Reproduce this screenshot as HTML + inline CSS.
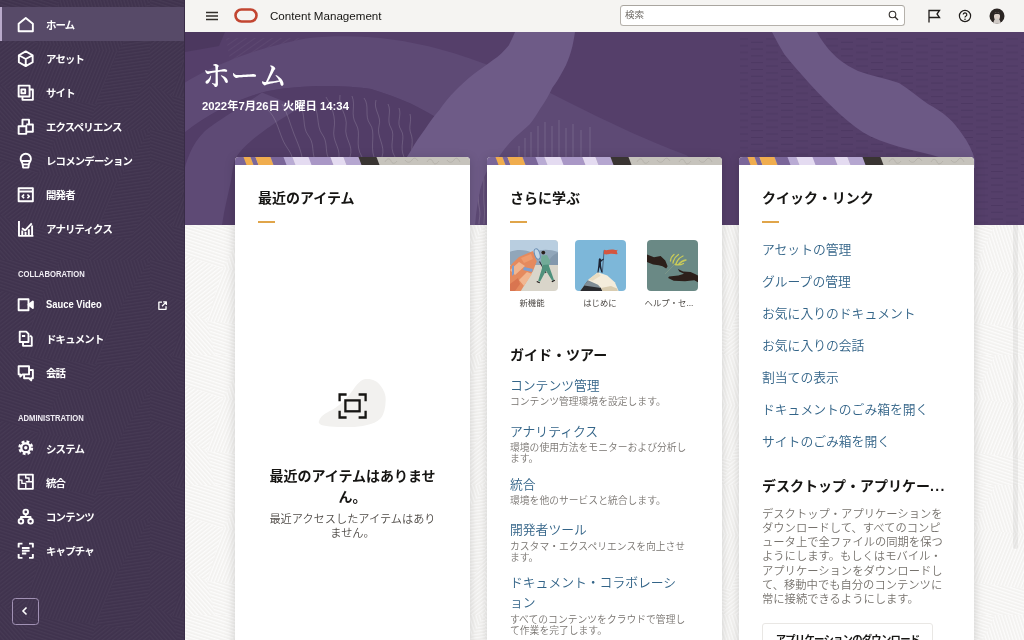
<!DOCTYPE html>
<html lang="ja">
<head>
<meta charset="utf-8">
<title>Content Management</title>
<style>
*{box-sizing:border-box;margin:0;padding:0}
html,body{width:1024px;height:640px;overflow:hidden}
body{will-change:transform;font-family:"Liberation Sans","Noto Sans CJK JP",sans-serif;background:#f1efed;color:#161513;position:relative}
#side{position:absolute;left:0;top:0;width:185px;height:640px;background:#40334e;overflow:hidden;border-right:1.5px solid #392c47}
#side .tex{position:absolute;left:0;top:0;width:185px;height:640px}
#side .sel{position:absolute;left:0;top:7px;width:183.5px;height:34px;background:#574a68;border-left:2px solid #b9aacb}
.ni{position:absolute;left:0;width:185px;height:20px;color:#fff;font-size:10.4px;letter-spacing:-.8px;font-weight:700;line-height:20px}
.ni span{position:absolute;left:46px;top:0;white-space:nowrap}
.ni svg{position:absolute;left:16.5px;top:-.2px;width:17.5px;height:17.5px;fill:none;stroke:#fff;stroke-width:1.75;stroke-linejoin:round;overflow:visible}
.sh{position:absolute;left:18px;color:#f0edf4;font-size:8.4px;font-weight:700;line-height:10px;white-space:nowrap;transform-origin:0 50%;transform:scaleX(.915)}
#collapse{position:absolute;left:12.2px;top:598px;width:27px;height:27px;border:1.6px solid #a191b4;border-radius:3.5px}
#collapse svg{position:absolute;left:6.7px;top:6.6px;width:10px;height:10px;fill:none;stroke:#fff;stroke-width:1.6}
#top{position:absolute;left:185px;top:0;width:839px;height:32px;background:#f5f4f2}
#top .t{position:absolute;left:85px;top:9px;font-size:11.6px;line-height:14px;color:#161513;white-space:nowrap}
#search{position:absolute;left:435px;top:5.4px;width:285px;height:20.6px;background:#fff;border:1px solid #b5b1ab;border-top-color:#a9a59f;border-radius:3.5px}
#search span{position:absolute;left:4px;top:1.8px;font-size:9.6px;font-weight:350;line-height:14px;color:#66625d}
#banner{position:absolute;left:185px;top:32px;width:839px;height:192.5px;background:#4f3b62;overflow:hidden}
#banner svg{position:absolute;left:0;top:0}
#lower{position:absolute;left:185px;top:224.5px;width:839px;height:416px;background:#f3f2f0;overflow:hidden}
h1{position:absolute;left:202.3px;top:59.8px;font-family:"Liberation Serif","Noto Serif CJK SC",serif;font-weight:600;font-size:28.2px;line-height:34px;color:#fff;white-space:nowrap}
#date{position:absolute;left:202px;top:98.7px;font-size:11.3px;font-weight:700;color:#fff;line-height:14px;white-space:nowrap}
.card{position:absolute;top:157px;width:235px;height:500px;background:#fff;border-radius:4px 4px 0 0;overflow:hidden;box-shadow:0 2px 11px rgba(0,0,0,.17)}
.strip{position:absolute;left:0;top:0;width:235px;height:8.4px;background:#c6c3bc;overflow:hidden}
.strip i{position:absolute;top:-2px;height:12px;transform:skewX(21deg)}
.card h2{position:absolute;left:23px;font-size:14px;font-weight:700;line-height:20px;color:#161513;white-space:nowrap}
.card .bar{position:absolute;left:23px;top:63.5px;width:17px;height:2px;background:#e0a54a}
a{color:#336488;text-decoration:none}
.lk{position:absolute;left:23px;font-size:12.8px;font-weight:350;line-height:20px;white-space:nowrap}
.ds{position:absolute;left:23px;font-size:9.8px;font-weight:350;line-height:11px;color:#787470;white-space:nowrap}
.tl{position:absolute;top:83px;width:51px;height:51px;border-radius:4px;overflow:hidden}
.tl svg{position:absolute;left:0;top:0;width:51px;height:51px}
.tc{position:absolute;top:139.600px;width:70px;text-align:center;font-size:8.4px;line-height:12px;color:#4a4642;white-space:nowrap}
</style>
</head>
<body>
<div id="side">
  <svg style="position:absolute;left:0;top:0" width="185" height="640"><defs><pattern id="sh0" width="3.2" height="3.2" patternUnits="userSpaceOnUse" patternTransform="rotate(18)"><rect width="3.2" height="1.2" fill="#fff" fill-opacity=".035"/></pattern><pattern id="sh1" width="3.2" height="3.2" patternUnits="userSpaceOnUse" patternTransform="rotate(72)"><rect width="3.2" height="1.2" fill="#fff" fill-opacity=".035"/></pattern><pattern id="sh2" width="3.2" height="3.2" patternUnits="userSpaceOnUse" patternTransform="rotate(-38)"><rect width="3.2" height="1.2" fill="#fff" fill-opacity=".035"/></pattern><pattern id="sh3" width="3.2" height="3.2" patternUnits="userSpaceOnUse" patternTransform="rotate(112)"><rect width="3.2" height="1.2" fill="#fff" fill-opacity=".035"/></pattern><pattern id="sh4" width="3.2" height="3.2" patternUnits="userSpaceOnUse" patternTransform="rotate(-8)"><rect width="3.2" height="1.2" fill="#fff" fill-opacity=".035"/></pattern><pattern id="sh5" width="3.2" height="3.2" patternUnits="userSpaceOnUse" patternTransform="rotate(48)"><rect width="3.2" height="1.2" fill="#fff" fill-opacity=".035"/></pattern><pattern id="sgeo" width="150" height="130" patternUnits="userSpaceOnUse"><polygon points="0,0 60,0 38,44 0,30" fill="url(#sh0)"/><polygon points="60,0 120,0 150,0 118,52 38,44" fill="url(#sh1)"/><polygon points="0,30 38,44 22,96 0,84" fill="url(#sh2)"/><polygon points="38,44 118,52 96,104 22,96" fill="url(#sh3)"/><polygon points="118,52 150,0 150,70 130,110 96,104" fill="url(#sh4)"/><polygon points="0,84 22,96 30,130 0,130" fill="url(#sh5)"/><polygon points="22,96 96,104 88,130 30,130" fill="url(#sh0)"/><polygon points="96,104 130,110 150,70 150,130 88,130" fill="url(#sh2)"/></pattern></defs><rect width="185" height="640" fill="url(#sgeo)"/></svg>
  <div class="sel"></div>
  <div class="ni" style="top:15.7px"><svg viewBox="0 0 16 16"><path d="M1.500 7L8 1.800 14.500 7v7h-13z"/></svg><span>ホーム</span></div>
  <div class="ni" style="top:49.8px"><svg viewBox="0 0 16 16"><path d="M8 1.300l6.300 3.500v6.400L8 14.700l-6.300-3.500V4.800zM1.700 4.800L8 8.200l6.300-3.400M8 8.200v6.500"/></svg><span>アセット</span></div>
  <div class="ni" style="top:83.9px"><svg viewBox="0 0 16 16"><path d="M1.500 1.500h10v10h-10zM5 11.500v3h9.500V5h-3M4 5h3.500v3.500H4z"/></svg><span>サイト</span></div>
  <div class="ni" style="top:118.1px"><svg viewBox="0 0 16 16"><path d="M5 7V1.500h6V6M1.500 7.500h7v7h-7zM8.500 6h6v6.500h-6"/></svg><span>エクスペリエンス</span></div>
  <div class="ni" style="top:152.2px"><svg viewBox="0 0 16 16"><path d="M3.300 6.300a4.700 4.700 0 0 1 9.400 0c0 1.800-1 2.800-1.700 4.200l-.6 3.800H5.600L5 10.500C4.300 9.100 3.300 8.100 3.300 6.300zM4 8.300h8M5 11.300h6"/></svg><span>レコメンデーション</span></div>
  <div class="ni" style="top:186.3px"><svg viewBox="0 0 16 16"><path d="M1.500 2h13v12h-13zM1.500 5h13" /><path d="M6.500 7.800L4.800 9.500 6.500 11.200M9.500 7.800L11.200 9.500 9.500 11.200" stroke-width="1.500"/></svg><span>開発者</span></div>
  <div class="ni" style="top:220.4px"><svg viewBox="0 0 16 16"><path d="M1.800 1v13.500H15M4.800 14V9.500M7.800 14V11M10.800 14V8.500M13.800 14V5M4.500 7.500l3 2 6-6.500"/></svg><span>アナリティクス</span></div>
  <div class="sh" style="top:269.2px">COLLABORATION</div>
  <div class="ni" style="top:295.9px"><svg viewBox="0 0 16 16"><path d="M1.500 3h9v10h-9z"/><path d="M10.500 8l4-3v6z" fill="#fff"/></svg><span style="font-size:11.2px;letter-spacing:0;top:-1.800px;transform-origin:0 50%;transform:scaleX(.84)">Sauce Video</span>
    <svg viewBox="0 0 16 16" style="left:158.300px;top:4.700px;width:9.200px;height:9.200px;stroke-width:2.300"><path d="M7 2H1.500v12.500H14V9M9 1.500h5.500V7M14 2L7 9"/></svg></div>
  <div class="ni" style="top:330.0px"><svg viewBox="0 0 16 16"><path d="M2.500 1.500h6l2 2v7.500h-8zM5.500 11v3.500h8V6.500l-1.500-1.500M4.500 5.500h3"/></svg><span>ドキュメント</span></div>
  <div class="ni" style="top:364.2px"><svg viewBox="0 0 16 16"><path d="M1.500 2h9.500v7.500H5l-2 2v-2H1.500zM11 5.500h3.500v7.500H13v2l-2-2H6.500V9.500"/></svg><span>会話</span></div>
  <div class="sh" style="top:412.8px">ADMINISTRATION</div>
  <div class="ni" style="top:439.5px"><svg viewBox="0 0 16 16"><circle cx="8" cy="8" r="5.600" stroke-width="2.400" stroke-dasharray="2.500 1.898"/><circle cx="8" cy="8" r="4.600" fill="#fff" stroke-width="1"/><circle cx="8" cy="8" r="2.300" stroke="#40334e" stroke-width="1.500"/></svg><span>システム</span></div>
  <div class="ni" style="top:473.6px"><svg viewBox="0 0 16 16"><path d="M1.500 1.500h13v13h-13z"/><path d="M1.500 6.500h3v3h3.500v5M8 1.500v3h3v3.500h3.500M8 8h3.500" stroke-width="1.300"/></svg><span>統合</span></div>
  <div class="ni" style="top:507.7px"><svg viewBox="0 0 16 16"><circle cx="8" cy="3.600" r="2.100"/><circle cx="3.600" cy="12.200" r="2.100"/><circle cx="12.400" cy="12.200" r="2.100"/><path d="M8 5.700v2.600M3.600 10.100V8.300h8.800v1.800"/></svg><span>コンテンツ</span></div>
  <div class="ni" style="top:541.8px"><svg viewBox="0 0 16 16"><path d="M5 1.500H1.500V5M11 1.500h3.500V5M5 14.500H1.500V11M11 14.500h3.500V11M4.500 5.500h7M4.500 8h7M4.500 10.500h4"/></svg><span>キャプチャ</span></div>
  <div id="collapse"><svg viewBox="0 0 10 10"><path d="M6.500 1.500L3 5l3.500 3.500"/></svg></div>
</div>
<div id="top">
  <svg style="position:absolute;left:20px;top:11px" width="14" height="10" viewBox="0 0 14 10"><path d="M1 1.500h12M1 5h12M1 8.500h12" stroke="#312d2a" stroke-width="1.300" fill="none"/></svg>
  <svg style="position:absolute;left:49px;top:8.400px" width="24" height="15" viewBox="0 0 24 15"><rect x="1.500" y="1.500" width="21" height="12" rx="6" fill="none" stroke="#c24531" stroke-width="2.600"/></svg>
  <div class="t">Content Management</div>
  <div id="search"><span>検索</span>
    <svg style="position:absolute;right:5px;top:4px" width="11" height="11" viewBox="0 0 11 11"><circle cx="4.500" cy="4.500" r="3.300" fill="none" stroke="#312d2a" stroke-width="1.100"/><path d="M7 7l3 3" stroke="#312d2a" stroke-width="1.200"/></svg></div>
  <svg style="position:absolute;left:742px;top:9px" width="14" height="14" viewBox="0 0 14 14"><path d="M2 13.500V1.500h10.500L10 5l2.500 3.500H2" fill="none" stroke="#201d1b" stroke-width="1.300"/></svg>
  <svg style="position:absolute;left:773px;top:9px" width="14" height="14" viewBox="0 0 14 14"><circle cx="7" cy="7" r="5.600" fill="none" stroke="#201d1b" stroke-width="1.200"/><path d="M5.200 5.600a1.800 1.800 0 1 1 2.600 1.600c-.6.300-.8.600-.8 1.300" fill="none" stroke="#201d1b" stroke-width="1.200"/><circle cx="7" cy="10.200" r=".8" fill="#201d1b"/></svg>
  <svg style="position:absolute;left:804px;top:8px" width="16" height="16" viewBox="0 0 16 16"><circle cx="8" cy="8" r="7.500" fill="#2b2523"/><ellipse cx="8" cy="8.300" rx="3" ry="4.200" fill="#ddd0c8"/><path d="M4.500 15.500c0-3 1-5 3.500-5s3.500 2 3.500 5z" fill="#cfc9c5"/><path d="M4.500 7c0-4 7-4 7 0-1-1.500-6-1.500-7 0z" fill="#2b2523"/></svg>
</div>
<div id="banner"><svg width="839" height="193" viewBox="185 32 839 193">
<defs>
<pattern id="dash" width="30" height="6.800" patternUnits="userSpaceOnUse"><path d="M1 1.500h12M16 4.900h12" stroke="#2f1f45" stroke-opacity=".22" stroke-width="1"/></pattern>
<pattern id="hat" width="5" height="5" patternUnits="userSpaceOnUse" patternTransform="rotate(-35)"><path d="M0 2.500h5" stroke="#fff" stroke-opacity=".06" stroke-width=".8"/></pattern>
</defs>
<rect x="185" y="32" width="839" height="193" fill="#553f6a"/>
<rect x="740" y="36" width="284" height="189" fill="url(#dash)"/>
<path d="M185 32h40l-6 14-34 6z" fill="#4c385f"/>
<path d="M226 38h80l-6 14-70 8z" fill="url(#hat)"/>
<path d="M184 83C215 64 262 46 309 38C371 32 434 42 500 70C560 95 604 124 686 155L700 165V225H470V150C450 122 420 104 371 89C340 84 290 85 262 92.500C235 100 205 116 184 133Z" fill="#5e4a75"/>
<path d="M184 133C205 116 235 100 262 92.500C290 85 340 84 371 89C420 104 450 122 470 150V225H184Z" fill="#523d67"/>
<path d="M262 92.500C240 108 215 122 204 132C197 139 193 146 190 153C187 160 185 166 184 172V225H222C224 210 228 195 231 181C232 173 233 166 235 159C239 152 245 146 251 141C262 132 275 122 300 108Z" fill="#5e4a75"/>
<g fill="none" stroke="#fff" stroke-opacity=".22" stroke-width=".7">
<path d="M300 105c6 10 2 22 8 30s4 14 6 22"/>
<path d="M312 100c8 12 4 26 10 34s3 16 6 23"/>
<path d="M326 97c6 10 10 20 8 32s6 18 5 28"/>
<path d="M340 95c-2 12 8 20 6 32s8 18 4 30"/>
<path d="M352 96c4 10-2 18 4 28s-2 20 6 33"/>
<path d="M364 98c6 8 0 18 6 26s0 22 4 33"/>
<path d="M376 100c-3 10 6 16 3 26s7 20 3 31"/>
<path d="M388 104c4 8-2 16 3 24s-3 18 4 29"/>
<path d="M399 108c3 8-3 14 2 22s-2 16 3 27"/>
<path d="M410 114c2 8-2 12 1 20s-1 14 2 23"/>
<path d="M268 110c8 8 10 18 14 28s8 12 10 19"/>
<path d="M282 104c6 10 8 20 12 30s6 14 8 23"/>
<path d="M478 176c3 10-1 20 1 30s0 12 0 18M483 172c2 10 0 22 1 32s0 14 0 20"/>
</g>
<path d="M515 32C513 37 511 41 508.700 45.400C504 51 499 56 493 60C487 65 480 69 473.750 74C467 79 461 85 455 91C449 97 444 103 439.400 110C434 116 430 122 425.300 128.750C420 136 415 143 411 150.600L405 160C397 180 390 200 385 225H475C476 212 478 200 480 190C482 183 484 177 487 171L497 160C499 157 501 154 503.400 150.600C507 146 511 141 516 136.600C521 132 526 128 530 124C534 119 537 114 540 109C545 102 549 95 552.500 87.500C557 82 560 76 563.400 70C567 64 569 58 571 51.600C573 45 574 38 575 32Z" fill="#6e5b87"/>
<g stroke="#fff" stroke-opacity=".2" stroke-width=".7"><path d="M519 146v12M525 138v20M531 132v26M538 126v32M545 122v36M552 126v32M559 120v38M566 128v30M573 124v34M581 130v28M590 127v31"/></g>
<path d="M772 32C776 40 780 47 784.500 54.600C792 64 800 73 809 83C820 95 830 105 842 116C851 124 860 131 870.600 136.600C882 142 895 146 907.500 149C916 151 924 153 932 155L975 168V160C972 150 968 142 962 134C958 128 953 122 948.500 118C942 112 935 108 928 104C919 98 909 89 899 83C885 78 871 76 858 71C849 67 840 61 833.700 54.600C827 48 821 40 817 32Z" fill="#6c5985"/>
</svg></div>
<div id="lower"><svg style="position:absolute;left:0;top:0" width="839" height="416"><defs><pattern id="lh0" width="3.2" height="3.2" patternUnits="userSpaceOnUse" patternTransform="rotate(18)"><rect width="3.2" height="1.2" fill="#fff" fill-opacity=".75"/></pattern><pattern id="lh1" width="3.2" height="3.2" patternUnits="userSpaceOnUse" patternTransform="rotate(72)"><rect width="3.2" height="1.2" fill="#fff" fill-opacity=".75"/></pattern><pattern id="lh2" width="3.2" height="3.2" patternUnits="userSpaceOnUse" patternTransform="rotate(-38)"><rect width="3.2" height="1.2" fill="#fff" fill-opacity=".75"/></pattern><pattern id="lh3" width="3.2" height="3.2" patternUnits="userSpaceOnUse" patternTransform="rotate(112)"><rect width="3.2" height="1.2" fill="#fff" fill-opacity=".75"/></pattern><pattern id="lh4" width="3.2" height="3.2" patternUnits="userSpaceOnUse" patternTransform="rotate(-8)"><rect width="3.2" height="1.2" fill="#fff" fill-opacity=".75"/></pattern><pattern id="lh5" width="3.2" height="3.2" patternUnits="userSpaceOnUse" patternTransform="rotate(48)"><rect width="3.2" height="1.2" fill="#fff" fill-opacity=".75"/></pattern><pattern id="lgeo" width="150" height="130" patternUnits="userSpaceOnUse"><polygon points="0,0 60,0 38,44 0,30" fill="url(#lh0)"/><polygon points="60,0 120,0 150,0 118,52 38,44" fill="url(#lh1)"/><polygon points="0,30 38,44 22,96 0,84" fill="url(#lh2)"/><polygon points="38,44 118,52 96,104 22,96" fill="url(#lh3)"/><polygon points="118,52 150,0 150,70 130,110 96,104" fill="url(#lh4)"/><polygon points="0,84 22,96 30,130 0,130" fill="url(#lh5)"/><polygon points="22,96 96,104 88,130 30,130" fill="url(#lh0)"/><polygon points="96,104 130,110 150,70 150,130 88,130" fill="url(#lh2)"/></pattern></defs><rect width="839" height="416" fill="url(#lgeo)"/></svg><div style="position:absolute;left:827.500px;top:0;width:5.500px;height:324px;background:rgba(0,0,0,.055);border-radius:0 0 3px 3px"></div></div>
<h1>ホーム</h1>
<div id="date">2022年7月26日 火曜日 14:34</div>
<div class="card" id="c1" style="left:235px"><div class="strip"><i style="left:-4.0px;width:14.5px;background:#7a6699"></i><i style="left:10.2px;width:7.0px;background:#f0ad4e"></i><i style="left:16.9px;width:5.3px;background:#7a6699"></i><i style="left:21.9px;width:15.2px;background:#f0ad4e"></i><i style="left:36.8px;width:13.6px;background:#7a6699"></i><i style="left:50.1px;width:8.7px;background:#b9abd4"></i><i style="left:58.5px;width:16.8px;background:#e4dbf1"></i><i style="left:75.0px;width:22.2px;background:#a997c6"></i><i style="left:96.9px;width:12.9px;background:#e4dbf1"></i><i style="left:109.5px;width:15.8px;background:#b5a6d0"></i><i style="left:125.0px;width:17.5px;background:#393432"></i><svg style="position:absolute;left:146px;top:0" width="89" height="8" viewBox="0 0 89 8"><g fill="none" stroke="#a9a59d" stroke-width=".7" stroke-opacity=".7"><path d="M4 5c2-4 5-4 6-1s4 3 6 0M24 3c2 3 5 3 7 0s4-2 6 1M46 5c2-4 5-3 6 0s4 2 6-1M66 3c2 3 5 3 7 0s4-2 6 2"/></g></svg></div><h2 style="top:30.500px">最近のアイテム</h2><div class="bar"></div>
<svg style="position:absolute;left:75px;top:213px" width="90" height="65" viewBox="310 370 90 65"><path d="M319 421C321 415 326 413 332 410C342 404 348 397 353 390C357 384 361 379.500 366 379C372 378.500 377 381 380 385C384 390 386 395 385.700 400C385.500 408 384 414 381 418C377 422 372 424 367 425C361 426.500 356 427 350 427C342 427 335 427 330 426.400C325 426 321 425.500 320 424C318.500 423 318.500 422 319 421Z" fill="#f2f1ef"/><g fill="none" stroke="#161513" stroke-width="2.300"><path d="M346.600 394.500h-7v6.800M358.600 394.500h7v6.800M346.600 417.500h-7v-6.800M358.600 417.500h7v-6.800"/><rect x="345.400" y="400.400" width="14.200" height="10.900"/></g></svg>
<div style="position:absolute;left:0;top:309px;width:235px;text-align:center;font-size:14px;font-weight:700;line-height:21px;color:#161513">最近のアイテムはありませ<br>ん。</div>
<div style="position:absolute;left:0;top:354.500px;width:235px;text-align:center;font-size:11.200px;font-weight:350;line-height:14.600px;color:#4f4b47">最近アクセスしたアイテムはあり<br>ません。</div></div>
<div class="card" id="c2" style="left:487px"><div class="strip"><i style="left:-4.0px;width:14.5px;background:#7a6699"></i><i style="left:10.2px;width:7.0px;background:#f0ad4e"></i><i style="left:16.9px;width:5.3px;background:#7a6699"></i><i style="left:21.9px;width:15.2px;background:#f0ad4e"></i><i style="left:36.8px;width:13.6px;background:#7a6699"></i><i style="left:50.1px;width:8.7px;background:#b9abd4"></i><i style="left:58.5px;width:16.8px;background:#e4dbf1"></i><i style="left:75.0px;width:22.2px;background:#a997c6"></i><i style="left:96.9px;width:12.9px;background:#e4dbf1"></i><i style="left:109.5px;width:15.8px;background:#b5a6d0"></i><i style="left:125.0px;width:17.5px;background:#393432"></i><svg style="position:absolute;left:146px;top:0" width="89" height="8" viewBox="0 0 89 8"><g fill="none" stroke="#a9a59d" stroke-width=".7" stroke-opacity=".7"><path d="M4 5c2-4 5-4 6-1s4 3 6 0M24 3c2 3 5 3 7 0s4-2 6 1M46 5c2-4 5-3 6 0s4 2 6-1M66 3c2 3 5 3 7 0s4-2 6 2"/></g></svg></div><h2 style="top:30.500px">さらに学ぶ</h2><div class="bar"></div>
<div class="tl" style="left:23px;width:48px;border-radius:0 4px 4px 0" id="t1"><svg viewBox="0 0 51 51" style="left:-3px"><rect width="51" height="51" fill="#d9d5ca"/><rect width="51" height="12" fill="#b9cee0"/><path d="M0 13C8 9 18 9 26 13C33 9 42 9 51 12V25H0z" fill="#91a6ba"/><path d="M40 25c3-8 7-11 11-12v12z" fill="#8398ad"/><path d="M3 51V26l3.300-3.500L12 17l14-6 3.700 10.500L26 31 13.800 51z" fill="#e58a5e"/><path d="M3 30l9-8 6 4-10 9zM12 40l8-8 5 2-8 12z" fill="#f1b690"/><path d="M14 18l10-4 2 5-9 4z" fill="#ef9b6d"/><path d="M17 27l9 2-1 3-9-2zM5 26l2-1v9l-2 2z" fill="#7d9fd0"/><path d="M3 44l8-6 2 6-5 7H3z" fill="#d97550"/><ellipse cx="30.200" cy="14" rx="2.600" ry="5.400" transform="rotate(-18 30.200 14)" fill="#c3d7e6" stroke="#6b8fb5" stroke-width="1"/><path d="M32.500 21.500L39 33" stroke="#2b2a33" stroke-width="1.100"/><circle cx="36.300" cy="12.600" r="1.900" fill="#2a1f1a"/><path d="M34.500 15.500l5.500-.5 3.500 6.500-2 5-6 .500-1.500-6z" fill="#72ab98"/><path d="M36 25l5.500-.5 5.500 15.500-1.800.8-6.200-10-6 11-1.800-1z" fill="#4f917c"/><path d="M30 41l3 1.200-.5 1-3-1.200zM44.500 41.200l3-1.500.6 1-3 1.600z" fill="#1e1a1a"/></svg></div>
<div class="tl" style="left:88px" id="t2"><svg viewBox="0 0 51 51"><rect width="51" height="51" fill="#7db7d9"/><path d="M5.200 51l8.400-11.600L23 32.300l9.300 3.300 7.500 6.600 3.800 8.800z" fill="#f4ecdb"/><path d="M5.200 51l7.400-10.300 13.400 7.300 1.500 3z" fill="#2a2b2f"/><path d="M9 45.500l4-5.300 10 4.500 3 3.300z" fill="#7f8c95"/><path d="M23 32.300l-9.400 7.100 4 1.300 8-5z" fill="#e9dcc1"/><path d="M26 48l10-2 6 2.500.8 2.500H27.500z" fill="#d9ccb0"/><path d="M27.300 32.800L29.100 10.300" stroke="#3a3f55" stroke-width=".7"/><path d="M29.100 9.800c3 1.200 6-.8 9-.2s3.500.8 4.500.2l-.8 2 .8 2.200c-2 .6-4-.6-7-.2s-4 1-6.800.2z" fill="#d4563f"/><path d="M23.800 19.200a1.200 1.200 0 1 1 1.800 1.400l2.800-2 .5.600-3 2.800.2 4 1.300 6.300-1 .3-1.800-5.500-1.200 5.700-1-.2.900-7z" fill="#1c2333"/></svg></div>
<div class="tl" style="left:160px" id="t3"><svg viewBox="0 0 51 51"><rect width="51" height="51" fill="#6a8985"/><path d="M0 14.500l7 2.800 6.600-1.300 4.700 4.600 2.300 5.600-1.400 2.400-3.700-2.400-3.800-.9-5.600-.9L0 22z" fill="#2c1f1a"/><path d="M51 35.600l-7.400-3.700-7.500-.5-5.200-2.400 1.400 2.400 4.700 2.300-5.600 1.900-9.400.9-.9 1.500 5.600 2.800 11.300.4 9.300-.9 3.700 1.900z" fill="#2c1f1a"/><g fill="none" stroke="#c9ca58" stroke-width="1.300" stroke-linecap="round"><path d="M23.500 21c.2-3 1.500-5 3.500-6.500M26 23c.5-3.500 2.500-6.500 5.500-8.500M29 24c1-3.500 3.500-6.500 7-8M31.500 24.500c2-2.500 4.500-4 7.500-4.500M28 24.500c3 .8 6 .5 8.500-1"/></g><path d="M27 25l-9 9" stroke="#8fa48c" stroke-width=".5"/></svg></div>
<div class="tc" style="left:10px">新機能</div>
<div class="tc" style="left:78px">はじめに</div>
<div class="tc" style="left:147px">ヘルプ・セ...</div>
<h2 style="top:188px">ガイド・ツアー</h2>
<a class="lk" style="top:219px">コンテンツ管理</a>
<div class="ds" style="top:239px">コンテンツ管理環境を設定します。</div>
<a class="lk" style="top:264.500px">アナリティクス</a>
<div class="ds" style="top:285px">環境の使用方法をモニターおよび分析し<br>ます。</div>
<a class="lk" style="top:318px">統合</a>
<div class="ds" style="top:338px">環境を他のサービスと統合します。</div>
<a class="lk" style="top:363px">開発者ツール</a>
<div class="ds" style="top:383.500px">カスタマ・エクスペリエンスを向上させ<br>ます。</div>
<a class="lk" style="top:416px">ドキュメント・コラボレーシ<br>ョン</a>
<div class="ds" style="top:457px">すべてのコンテンツをクラウドで管理し<br>て作業を完了します。</div></div>
<div class="card" id="c3" style="left:739px"><div class="strip"><i style="left:-4.0px;width:14.5px;background:#7a6699"></i><i style="left:10.2px;width:7.0px;background:#f0ad4e"></i><i style="left:16.9px;width:5.3px;background:#7a6699"></i><i style="left:21.9px;width:15.2px;background:#f0ad4e"></i><i style="left:36.8px;width:13.6px;background:#7a6699"></i><i style="left:50.1px;width:8.7px;background:#b9abd4"></i><i style="left:58.5px;width:16.8px;background:#e4dbf1"></i><i style="left:75.0px;width:22.2px;background:#a997c6"></i><i style="left:96.9px;width:12.9px;background:#e4dbf1"></i><i style="left:109.5px;width:15.8px;background:#b5a6d0"></i><i style="left:125.0px;width:17.5px;background:#393432"></i><svg style="position:absolute;left:146px;top:0" width="89" height="8" viewBox="0 0 89 8"><g fill="none" stroke="#a9a59d" stroke-width=".7" stroke-opacity=".7"><path d="M4 5c2-4 5-4 6-1s4 3 6 0M24 3c2 3 5 3 7 0s4-2 6 1M46 5c2-4 5-3 6 0s4 2 6-1M66 3c2 3 5 3 7 0s4-2 6 2"/></g></svg></div><h2 style="top:30.500px">クイック・リンク</h2><div class="bar"></div>
<a class="lk" style="top:83px">アセットの管理</a>
<a class="lk" style="top:115px">グループの管理</a>
<a class="lk" style="top:147px">お気に入りのドキュメント</a>
<a class="lk" style="top:179px">お気に入りの会話</a>
<a class="lk" style="top:211px">割当ての表示</a>
<a class="lk" style="top:243px">ドキュメントのごみ箱を開く</a>
<a class="lk" style="top:275px">サイトのごみ箱を開く</a>
<h2 style="top:318.500px">デスクトップ・アプリケー<span style="letter-spacing:1.300px">...</span></h2>
<div style="position:absolute;left:23px;top:350px;font-size:11.300px;font-weight:350;line-height:14.150px;color:#76726d;white-space:nowrap">デスクトップ・アプリケーションを<br>ダウンロードして、すべてのコンピ<br>ュータ上で全ファイルの同期を保つ<br>ようにします。もしくはモバイル・<br>アプリケーションをダウンロードし<br>て、移動中でも自分のコンテンツに<br>常に接続できるようにします。</div>
<div style="position:absolute;left:23px;top:466px;width:171px;height:34px;border:1px solid #e9e7e4;border-radius:3px;text-align:center;font-size:10.400px;letter-spacing:-.800px;font-weight:700;line-height:31.500px;color:#161513;white-space:nowrap">アプリケーションのダウンロード</div></div>
</body>
</html>
